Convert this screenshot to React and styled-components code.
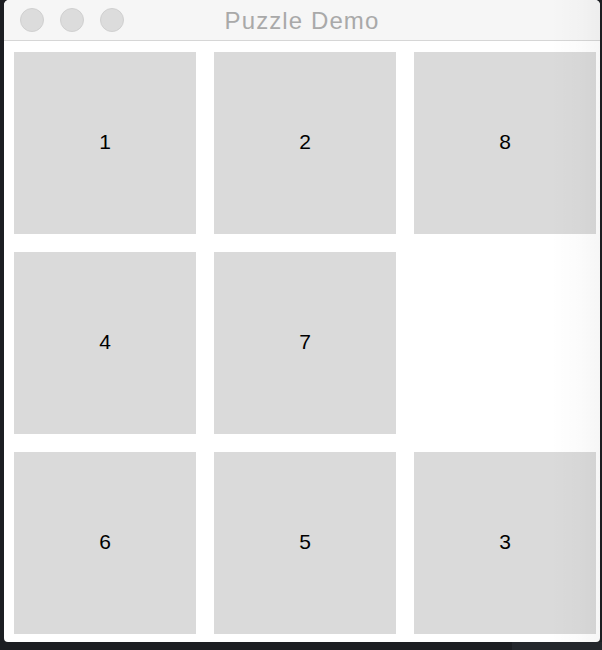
import React from "react";
import styled, { createGlobalStyle } from "styled-components";

const Global = createGlobalStyle`
  html, body { margin: 0; padding: 0; background: #1c1e22; }
  body { width: 602px; height: 650px; overflow: hidden; font-family: "Liberation Sans", Arial, sans-serif; }
`;

const Desk = styled.div`
  position: relative;
  width: 602px;
  height: 650px;
  padding-left: 4px;
  box-sizing: border-box;
`;

const Window = styled.div`
  position: relative;
  width: 596px;
  height: 642px;
  background: #ffffff;
  border-radius: 5px 5px 4px 4px;
  overflow: hidden;
  display: flex;
  flex-direction: column;
`;

const TitleBar = styled.div`
  position: relative;
  height: 40px;
  flex: none;
  background: #f6f6f6;
  border-bottom: 1px solid #d6d6d6;
  display: flex;
  align-items: center;
  justify-content: center;
`;

const Lights = styled.div`
  position: absolute;
  left: 16px;
  top: 8px;
  display: flex;
  gap: 16px;
`;

const Light = styled.span`
  width: 24px;
  height: 24px;
  border-radius: 50%;
  background: #dcdcdc;
  border: 1px solid #d0d0d0;
  box-sizing: border-box;
`;

const Title = styled.div`
  font-family: "Liberation Sans", Arial, sans-serif;
  font-size: 24px;
  color: #a9a9a9;
  letter-spacing: 1.1px;
  margin-top: 1px;
`;

const Board = styled.div`
  display: grid;
  grid-template-columns: repeat(3, 182px);
  grid-template-rows: repeat(3, 182px);
  gap: 18px;
  padding: 11px 0 0 10px;
`;

const Tile = styled.div`
  background: ${(p) => (p.$empty ? "transparent" : "#dadada")};
  display: flex;
  align-items: center;
  justify-content: center;
  padding-bottom: 2px;
  box-sizing: border-box;
  font-family: "Liberation Sans", Arial, sans-serif;
  font-size: 21px;
  color: #000;
`;

const Shade = styled.div`
  position: absolute;
  right: 0;
  top: 0;
  bottom: 0;
  width: 50px;
  pointer-events: none;
  background: linear-gradient(to right, rgba(0,0,0,0) 0%, rgba(0,0,0,0.015) 60%, rgba(0,0,0,0.035) 100%);
`;

const Dock = styled.div`
  position: absolute;
  right: 0;
  bottom: 0;
  width: 90px;
  height: 8px;
  background: #24272c;
`;

const tiles = [1, 2, 8, 4, 7, null, 6, 5, 3];

export default function App() {
  return (
    <>
      <Global />
      <Desk>
        <Window>
          <TitleBar>
            <Lights>
              <Light />
              <Light />
              <Light />
            </Lights>
            <Title>Puzzle Demo</Title>
          </TitleBar>
          <Board>
            {tiles.map((t, i) => (
              <Tile key={i} $empty={t === null}>
                {t}
              </Tile>
            ))}
          </Board>
          <Shade />
        </Window>
        <Dock />
      </Desk>
    </>
  );
}
